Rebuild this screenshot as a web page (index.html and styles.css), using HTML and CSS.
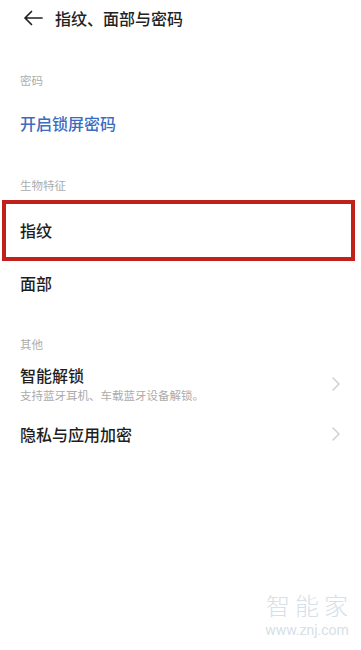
FILE: index.html
```html
<!DOCTYPE html>
<html lang="zh-CN">
<head>
  <meta charset="UTF-8" />
  <meta name="viewport" content="width=device-width, initial-scale=1.0"/>
  <title>指纹、面部与密码</title>
  <link rel="stylesheet" href="styles.css">
</head>
<body>
  <div class="page">
    <header class="head">
      <svg class="back" width="20" height="16" viewBox="0 0 20 16">
        <path d="M19 8H2M8.5 1.5L2 8l6.5 6.5" fill="none" stroke="#222" stroke-width="1.7" stroke-linecap="round" stroke-linejoin="round"/>
      </svg>
      <h1 class="title">指纹、面部与密码</h1>
    </header>

    <div class="label label-first">密码</div>
    <div class="item item-blue">开启锁屏密码</div>

    <div class="label label-bio">生物特征</div>
    <div class="item item-marked">指纹</div>
    <div class="item item-face">面部</div>

    <div class="label label-other">其他</div>
    <div class="item item-two">
      <div class="item-text">
        <div class="item-title">智能解锁</div>
        <div class="item-sub">支持蓝牙耳机、车载蓝牙设备解锁。</div>
      </div>
      <svg class="chev" width="8" height="14" viewBox="0 0 8 14">
        <path d="M1 1l6 6-6 6" fill="none" stroke="#cdcdcd" stroke-width="1.4" stroke-linecap="round" stroke-linejoin="round"/>
      </svg>
    </div>
    <div class="item item-last">
      <div class="item-title">隐私与应用加密</div>
      <svg class="chev" width="8" height="14" viewBox="0 0 8 14">
        <path d="M1 1l6 6-6 6" fill="none" stroke="#cdcdcd" stroke-width="1.4" stroke-linecap="round" stroke-linejoin="round"/>
      </svg>
    </div>

    <div class="mark">
      <div class="mark-name">智能家</div>
      <div class="mark-url">www.znj.com</div>
    </div>
  </div>
</body>
</html>
```

FILE: styles.css
```css
* {
  margin: 0;
  padding: 0;
  box-sizing: border-box;
}

body {
  font-family: "Noto Sans CJK SC", "Noto Sans", sans-serif;
  background: #fff;
  color: #1e1e1e;
}

.page {
  position: relative;
  width: 361px;
  height: 650px;
  overflow: hidden;
}

.head {
  height: 36px;
  display: flex;
  align-items: center;
  padding-left: 23px;
}

.back {
  display: block;
}

.title {
  margin-left: 12px;
  font-size: 16px;
  font-weight: 500;
  color: #222;
}

.label {
  height: 24px;
  line-height: 24px;
  padding-left: 20px;
  font-size: 11.5px;
  color: #adadad;
}

.label-first { margin-top: 32px; }
.label-bio { margin-top: 25px; }
.label-other { margin-top: 28px; }

.item {
  display: flex;
  align-items: center;
  justify-content: space-between;
  padding: 0 21px 0 20px;
  font-size: 16px;
  font-weight: 500;
}

.item-blue {
  margin-top: 6px;
  height: 50px;
  color: #3b6cc2;
}

.item-marked {
  margin: 3px 6px 0 2px;
  height: 61px;
  padding-left: 14px;
  padding-bottom: 2px;
  border: 4px solid #c0211b;
}

.item-face {
  height: 43px;
}

.item-two {
  height: 54px;
  padding-top: 1px;
}

.item-title {
  line-height: 22px;
}

.item-sub {
  margin-top: 1px;
  line-height: 16px;
  font-size: 11.5px;
  font-weight: 400;
  color: #ababab;
}

.item-last {
  height: 48px;
}

.chev {
  display: block;
}

.mark {
  position: absolute;
  left: 262px;
  top: 587px;
  width: 90px;
  display: flex;
  flex-direction: column;
  align-items: center;
  color: #d6e0e8;
}

.mark-name {
  font-size: 24px;
  font-weight: 300;
  letter-spacing: 5px;
  margin-right: -5px;
}

.mark-url {
  font-family: Roboto, sans-serif;
  font-size: 14px;
}
```
